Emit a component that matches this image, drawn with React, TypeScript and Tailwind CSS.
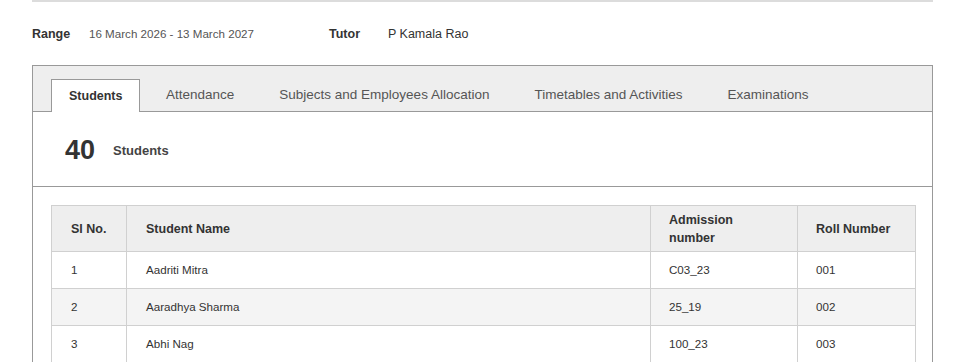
import React from 'react';

type Student = {
  sl: number;
  name: string;
  admission: string;
  roll: string;
};

const students: Student[] = [
  { sl: 1, name: 'Aadriti Mitra', admission: 'C03_23', roll: '001' },
  { sl: 2, name: 'Aaradhya Sharma', admission: '25_19', roll: '002' },
  { sl: 3, name: 'Abhi Nag', admission: '100_23', roll: '003' }
];

const tabs = [
  'Students',
  'Attendance',
  'Subjects and Employees Allocation',
  'Timetables and Activities',
  'Examinations'
];

const App = () => {
  return (
    <div className="h-[362px] overflow-hidden bg-white font-['Liberation_Sans',Arial,sans-serif] text-[#333]">
      <div className="ml-[32px] w-[901px]">
        <div className="h-[2px] bg-[#dcdcdc]" />

        {/* batch info */}
        <div className="flex h-[63px] items-center pb-[1px] pt-[2px] text-[12.5px]">
          <span className="w-[57px] font-bold">Range</span>
          <span className="w-[240px] text-[11.6px] text-[#555]">
            16 March 2026 - 13 March 2027
          </span>
          <span className="w-[59px] font-bold">Tutor</span>
          <span className="text-[#333]">P Kamala Rao</span>
        </div>

        <div className="border border-[#999]">
          {/* tabs */}
          <div className="flex gap-[6px] border-b border-[#999] bg-[#eee] px-[18px] pt-[13px]">
            {tabs.map((tab, i) =>
              i === 0 ? (
                <div
                  key={tab}
                  className="-mb-px flex h-[33px] items-center border border-b-0 border-[#999] bg-white px-[17px] text-[12.5px] font-bold text-[#333]">
                  {tab}
                </div>
              ) : (
                <div
                  key={tab}
                  className="flex h-[32px] items-center px-[19.5px] text-[13.5px] text-[#555]">
                  {tab}
                </div>
              )
            )}
          </div>

          {/* count */}
          <div className="flex h-[75px] items-center border-b border-[#999] pl-[32px] pt-[3px]">
            <span className="text-[27px] font-bold leading-none text-[#333]">40</span>
            <span className="ml-[18px] text-[13px] font-bold text-[#444]">Students</span>
          </div>

          {/* table */}
          <div className="px-[18px] pt-[18px]">
            <table className="w-[864px] table-fixed border-collapse text-left">
              <colgroup>
                <col className="w-[75px]" />
                <col className="w-[524px]" />
                <col className="w-[147px]" />
                <col className="w-[118px]" />
              </colgroup>
              <thead>
                <tr className="h-[46px] bg-[#eee] text-[12.5px] font-bold leading-[18px] text-[#333]">
                  <th className="border border-[#d0d0d0] px-[19px]">Sl No.</th>
                  <th className="border border-[#d0d0d0] px-[19px]">Student Name</th>
                  <th className="border border-[#d0d0d0] px-[18px]">
                    Admission
                    <br />
                    number
                  </th>
                  <th className="border border-[#d0d0d0] px-[18px]">Roll Number</th>
                </tr>
              </thead>
              <tbody className="text-[11.6px] text-[#333]">
                {students.map((s, i) => (
                  <tr
                    key={s.sl}
                    className={`h-[37px] ${i % 2 === 1 ? 'bg-[#f4f4f4]' : 'bg-white'}`}>
                    <td className="border border-[#d0d0d0] px-[19px]">{s.sl}</td>
                    <td className="border border-[#d0d0d0] px-[19px]">{s.name}</td>
                    <td className="border border-[#d0d0d0] px-[18px]">{s.admission}</td>
                    <td className="border border-[#d0d0d0] px-[18px]">{s.roll}</td>
                  </tr>
                ))}
              </tbody>
            </table>
          </div>
        </div>
      </div>
    </div>
  );
};

export default App;
